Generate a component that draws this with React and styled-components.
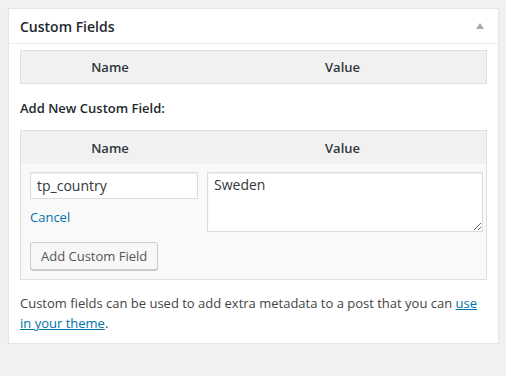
import React from "react";
import styled, { createGlobalStyle } from "styled-components";

const GlobalStyle = createGlobalStyle`
  body {
    margin: 0;
    background: #f1f1f1;
    font-family: "Open Sans", "Liberation Sans", sans-serif;
    font-size: 13px;
    color: #444;
  }
`;

const Page = styled.div`
  padding: 8px 7px 0 8px;
`;

const Panel = styled.div`
  background: #fff;
  border: 1px solid #e5e5e5;
  box-shadow: 0 1px 1px rgba(0, 0, 0, 0.04);
`;

const Header = styled.div`
  display: flex;
  align-items: center;
  justify-content: space-between;
  height: 34px;
  padding: 0 14px 0 11px;
  border-bottom: 1px solid #eee;

  h2 {
    margin: 0;
    font-size: 14px;
    font-weight: 600;
    color: #23282d;
  }
`;

const Body = styled.div`
  padding: 6px 11px 10px;
`;

const Table = styled.table`
  width: 100%;
  border: 1px solid #dfdfdf;
  border-spacing: 0;
  background: #f9f9f9;

  th {
    background: #f1f1f1;
    height: ${(p) => p.$head}px;
    padding: 0;
    font-weight: 600;
    color: #32373c;
    text-align: center;
  }

  td {
    vertical-align: top;
    padding: 0;
  }
`;

const AddTitle = styled.p`
  margin: 15px 0 13px;
  font-weight: 600;
  color: #23282d;
  line-height: 18px;
`;

const NameCell = styled.div`
  display: flex;
  flex-direction: column;
  align-items: flex-start;
  padding: 8px 0 9px 9px;
`;

const Input = styled.input`
  box-sizing: border-box;
  width: 168px;
  height: 27px;
  padding: 0 6px;
  border: 1px solid #ddd;
  box-shadow: inset 0 1px 2px rgba(0, 0, 0, 0.07);
  font-family: inherit;
  font-size: 14px;
  color: #32373c;
  outline: none;
`;

const TextArea = styled.textarea`
  display: block;
  box-sizing: border-box;
  width: 276px;
  height: 60px;
  margin: 8px 0 0 8px;
  padding: 2px 6px;
  border: 1px solid #ddd;
  box-shadow: inset 0 1px 2px rgba(0, 0, 0, 0.07);
  font-family: inherit;
  font-size: 14px;
  line-height: 20px;
  color: #32373c;
  outline: none;
`;

const Link = styled.a`
  color: #0073aa;
  cursor: pointer;
  text-decoration: ${(p) => (p.$underline ? "underline" : "none")};
`;

const CancelLink = styled(Link)`
  margin: 9px 0 16px;
  line-height: 18px;
`;

const Button = styled.button`
  height: 28px;
  padding: 0 10px;
  border: 1px solid #ccc;
  border-radius: 3px;
  background: #f7f7f7;
  box-shadow: 0 1px 0 #ccc;
  font-family: inherit;
  font-size: 13px;
  color: #555;
`;

const Note = styled.p`
  margin: 13px 0 0;
  line-height: 20px;
`;

function Arrow() {
  return (
    <svg width="8" height="6" viewBox="0 0 8 6">
      <path d="M4 0 L8 6 L0 6 Z" fill="#aaa" />
    </svg>
  );
}

export default function App() {
  return (
    <Page>
      <GlobalStyle />
      <Panel>
        <Header>
          <h2>Custom Fields</h2>
          <Arrow />
        </Header>
        <Body>
          <Table $head={32}>
            <thead>
              <tr>
                <th style={{ width: 178 }}>Name</th>
                <th>Value</th>
              </tr>
            </thead>
          </Table>
          <AddTitle>Add New Custom Field:</AddTitle>
          <Table $head={33}>
            <thead>
              <tr>
                <th style={{ width: 178 }}>Name</th>
                <th>Value</th>
              </tr>
            </thead>
            <tbody>
              <tr>
                <td>
                  <NameCell>
                    <Input defaultValue="tp_country" />
                    <CancelLink>Cancel</CancelLink>
                    <Button>Add Custom Field</Button>
                  </NameCell>
                </td>
                <td>
                  <TextArea defaultValue="Sweden" />
                </td>
              </tr>
            </tbody>
          </Table>
          <Note>
            Custom fields can be used to add extra metadata to a post that you
            can <Link $underline>use in your theme</Link>.
          </Note>
        </Body>
      </Panel>
    </Page>
  );
}
